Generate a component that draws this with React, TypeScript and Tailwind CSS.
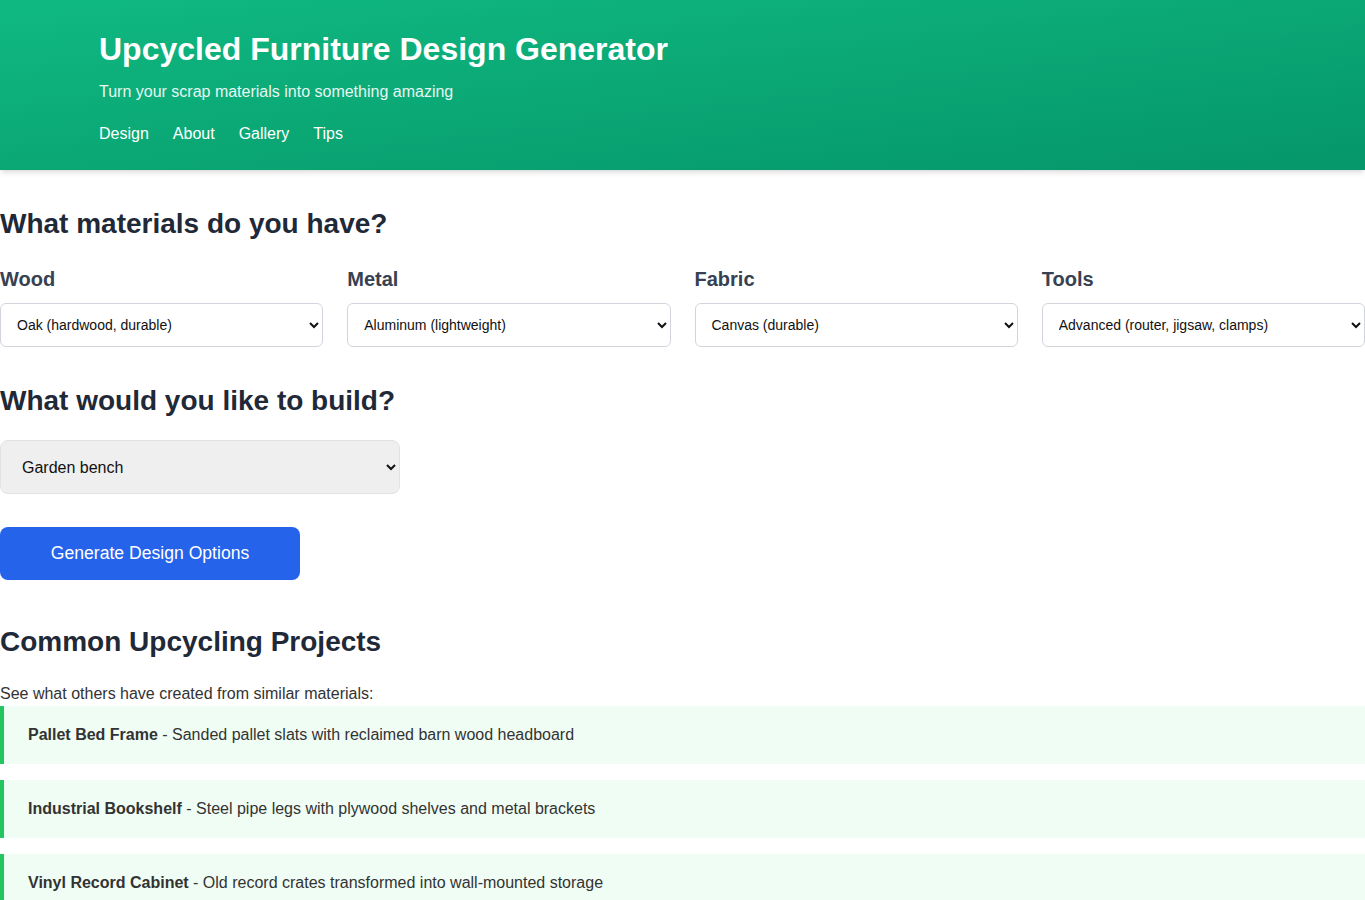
import React, { useState } from 'react';

const materials = [
  { label: 'Wood', value: 'Oak (hardwood, durable)', options: ['Oak (hardwood, durable)', 'Pine (softwood, easy to cut)', 'Pallet wood (reclaimed)'] },
  { label: 'Metal', value: 'Aluminum (lightweight)', options: ['Aluminum (lightweight)', 'Steel pipe', 'Copper'] },
  { label: 'Fabric', value: 'Canvas (durable)', options: ['Canvas (durable)', 'Denim', 'Linen'] },
  { label: 'Tools', value: 'Advanced (router, jigsaw, clamps)', options: ['Basic (hammer, saw, drill)', 'Intermediate (sander, level)', 'Advanced (router, jigsaw, clamps)'] },
];

const projects = [
  { title: 'Pallet Bed Frame', desc: 'Sanded pallet slats with reclaimed barn wood headboard' },
  { title: 'Industrial Bookshelf', desc: 'Steel pipe legs with plywood shelves and metal brackets' },
  { title: 'Vinyl Record Cabinet', desc: 'Old record crates transformed into wall-mounted storage' },
];

export default function App() {
  const [picks, setPicks] = useState<string[]>(materials.map(m => m.value));
  const [build, setBuild] = useState('Garden bench');

  return (
    <div className="min-h-screen bg-white font-['Liberation_Sans',Arial,sans-serif] text-[#333]">
      {/* header */}
      <header className="h-[170px] bg-gradient-to-br from-[#10b981] to-[#059669] px-[99px] pt-[29px] text-white shadow-md">
        <h1 className="text-[32px] font-bold leading-[40px]">Upcycled Furniture Design Generator</h1>
        <p className="mt-[11px] text-base leading-6 opacity-90">Turn your scrap materials into something amazing</p>
        <nav className="mt-[18px] flex gap-6 text-base leading-6">
          <a href="#">Design</a>
          <a href="#">About</a>
          <a href="#">Gallery</a>
          <a href="#">Tips</a>
        </nav>
      </header>

      <main>
        <h2 className="mt-[37px] text-[28px] font-bold leading-[34px] text-[#1f2937]">What materials do you have?</h2>

        <div className="mt-[23px] grid grid-cols-4 gap-6">
          {materials.map((m, i) => (
            <div key={m.label}>
              <label className="block text-[20px] font-semibold leading-[30px] text-[#374151]">{m.label}</label>
              <select
                value={picks[i]}
                onChange={e => setPicks(p => p.map((v, j) => (j === i ? e.target.value : v)))}
                className="mt-[9px] h-[44px] w-full rounded-md border border-[#d1d5db] bg-white pl-[12px] pr-[4px] text-sm text-[#111]"
              >
                {m.options.map(o => (
                  <option key={o}>{o}</option>
                ))}
              </select>
            </div>
          ))}
        </div>

        <h2 className="mt-[37px] text-[28px] font-bold leading-[34px] text-[#1f2937]">What would you like to build?</h2>

        <select
          value={build}
          onChange={e => setBuild(e.target.value)}
          className="mt-[22px] block h-[54px] w-[400px] rounded-lg border border-[#e2e2e2] bg-[#efefef] pl-[17px] pr-[6px] text-base text-[#111]"
        >
          <option>Garden bench</option>
          <option>Coffee table</option>
          <option>Bookshelf</option>
          <option>Side table</option>
        </select>

        <button className="mt-[33px] block h-[53px] w-[300px] rounded-lg bg-[#2563eb] text-[17.6px] text-white">
          Generate Design Options
        </button>

        <h2 className="mt-[45px] text-[28px] font-bold leading-[34px] text-[#1f2937]">Common Upcycling Projects</h2>
        <p className="mt-[23px] text-base leading-6 text-[#333]">See what others have created from similar materials:</p>

        <div className="flex flex-col gap-4">
          {projects.map(p => (
            <div key={p.title} className="border-l-4 border-[#22c55e] bg-[#f0fdf4] py-[17px] pl-6 text-base leading-6 text-[#333]">
              <strong>{p.title}</strong> - {p.desc}
            </div>
          ))}
        </div>
      </main>
    </div>
  );
}
